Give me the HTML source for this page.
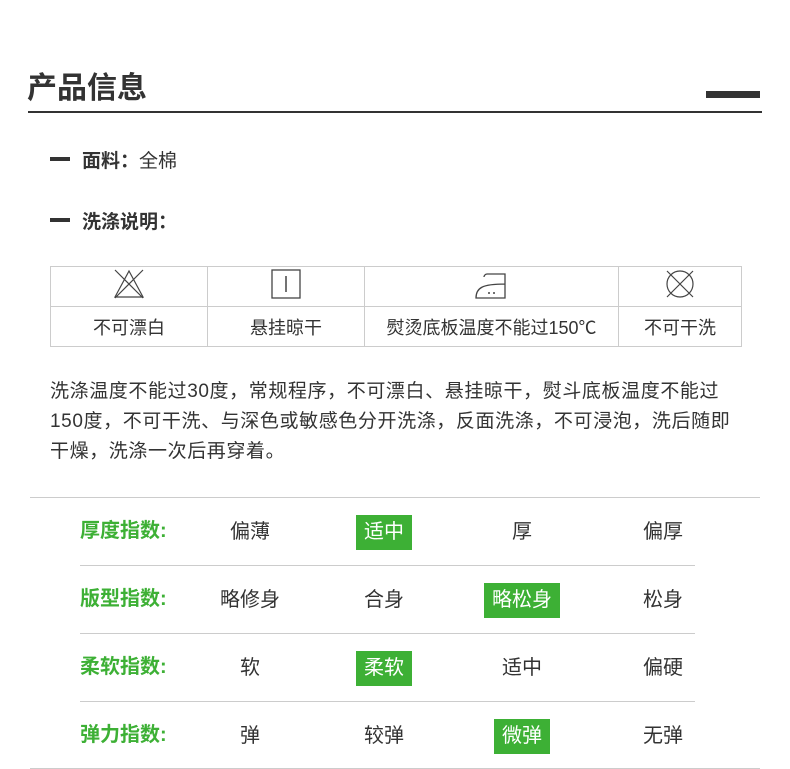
<!DOCTYPE html>
<html><head><meta charset="utf-8"><style>
*{margin:0;padding:0;box-sizing:border-box}
body{width:790px;height:769px;background:#fff;position:relative;overflow:hidden;font-family:"Liberation Sans","Noto Sans CJK SC",sans-serif;color:#333}
.a{position:absolute;white-space:nowrap}
.t{font-size:30px;font-weight:bold;left:27px;top:63px;color:#333}
.hl{left:28px;top:111px;width:734px;height:2px;background:#333}
.bar{left:706px;top:91px;width:54px;height:7px;background:#333}
.dash{width:20px;height:4px;background:#333}
.b{font-size:19px;font-weight:bold}
table.w{position:absolute;left:50px;top:266px;width:692px;border-collapse:collapse}
table.w td{border:1px solid #ccc;text-align:center;font-size:18px;height:40px;color:#333}
.p{left:50px;top:377px;font-size:19px;line-height:30px;color:#333;letter-spacing:0.6px}
.ln{height:1px;background:#ccc}
.g{color:#3db035;font-weight:bold;font-size:20px;left:80px}
.c{font-size:20px;transform:translateX(-50%);padding:4px 8px;line-height:27px}
.on{background:#3db035;color:#fff}
</style></head><body>
<div class="a t">产品信息</div>
<div class="a hl"></div>
<div class="a bar"></div>
<div class="a dash" style="left:50px;top:157px"></div>
<div class="a" style="left:82px;top:146px;font-size:19px"><b>面料：</b>全棉</div>
<div class="a dash" style="left:50px;top:218px"></div>
<div class="a b" style="left:82px;top:207px">洗涤说明：</div>
<table class="w"><tr>
<td style="width:157px"><svg width="34" height="32" viewBox="0 0 34 32"><path d="M17 3 L3 29 H31 Z M3 2 L31 30 M31 2 L3 30" fill="none" stroke="#444" stroke-width="1.2"/></svg></td>
<td style="width:157px"><svg width="32" height="32" viewBox="0 0 32 32"><rect x="2" y="2" width="28" height="28" fill="none" stroke="#444" stroke-width="1.3"/><path d="M16 8V24" stroke="#444" stroke-width="1.5"/></svg></td>
<td style="width:254px"><svg width="36" height="32" viewBox="0 0 36 32"><path d="M13 6H31V30H2C2 20 8 16 31 16M13 6C11 6 10 8 10 9" fill="none" stroke="#444" stroke-width="1.3"/><circle cx="15" cy="25" r="1" fill="#444"/><circle cx="20" cy="25" r="1" fill="#444"/></svg></td>
<td><svg width="32" height="32" viewBox="0 0 32 32"><circle cx="16" cy="16" r="13" fill="none" stroke="#444" stroke-width="1.2"/><path d="M3 3L29 29M29 3L3 29" stroke="#444" stroke-width="1.2"/></svg></td>
</tr><tr><td>不可漂白</td><td>悬挂晾干</td><td>熨烫底板温度不能过150℃</td><td>不可干洗</td></tr></table>
<div class="a p">洗涤温度不能过30度，常规程序，不可漂白、悬挂晾干，熨斗底板温度不能过<br>150度，不可干洗、与深色或敏感色分开洗涤，反面洗涤，不可浸泡，洗后随即<br>干燥，洗涤一次后再穿着。</div>
<div class="a ln" style="left:30px;top:497px;width:730px"></div>
<div class="a ln" style="left:80px;top:565px;width:615px"></div>
<div class="a ln" style="left:80px;top:633px;width:615px"></div>
<div class="a ln" style="left:80px;top:701px;width:615px"></div>
<div class="a ln" style="left:30px;top:768px;width:730px"></div>

<div class="a g" style="top:514px">厚度指数:</div>
<div class="a c" style="left:250px;top:515px">偏薄</div>
<div class="a c on" style="left:384px;top:515px">适中</div>
<div class="a c" style="left:522px;top:515px">厚</div>
<div class="a c" style="left:663px;top:515px">偏厚</div>

<div class="a g" style="top:582px">版型指数:</div>
<div class="a c" style="left:250px;top:583px">略修身</div>
<div class="a c" style="left:384px;top:583px">合身</div>
<div class="a c on" style="left:522px;top:583px">略松身</div>
<div class="a c" style="left:663px;top:583px">松身</div>

<div class="a g" style="top:650px">柔软指数:</div>
<div class="a c" style="left:250px;top:651px">软</div>
<div class="a c on" style="left:384px;top:651px">柔软</div>
<div class="a c" style="left:522px;top:651px">适中</div>
<div class="a c" style="left:663px;top:651px">偏硬</div>

<div class="a g" style="top:718px">弹力指数:</div>
<div class="a c" style="left:250px;top:719px">弹</div>
<div class="a c" style="left:384px;top:719px">较弹</div>
<div class="a c on" style="left:522px;top:719px">微弹</div>
<div class="a c" style="left:663px;top:719px">无弹</div>
</body></html>
